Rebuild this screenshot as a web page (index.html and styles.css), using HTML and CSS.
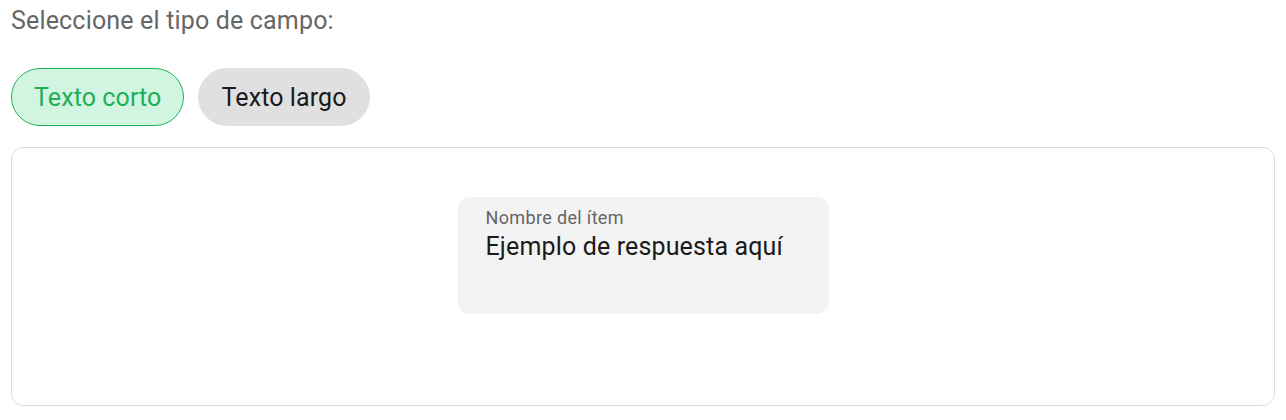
FILE: index.html
```html
<!DOCTYPE html>
<html lang="es">
<head>
<meta charset="utf-8">
<link rel="stylesheet" href="styles.css">
</head>
<body>
<div class="page">
  <p class="prompt">Seleccione el tipo de campo:</p>
  <div class="chips">
    <button class="chip chip-active">Texto corto</button>
    <button class="chip">Texto largo</button>
  </div>
  <div class="card">
    <div class="field">
      <div class="field-label">Nombre del ítem</div>
      <div class="field-value">Ejemplo de respuesta aquí</div>
    </div>
  </div>
</div>
</body>
</html>
```
FILE: styles.css
```css
html, body {
  margin: 0;
  padding: 0;
  background: #ffffff;
}
.page {
  font-family: Roboto, "Liberation Sans", sans-serif;
  padding: 0 11px 0 11px;
}
.prompt {
  margin: 0;
  padding-top: 6px;
  font-size: 25px;
  line-height: 30px;
  letter-spacing: 0.17px;
  color: #666666;
}
.chips {
  display: flex;
  gap: 14px;
  margin-top: 32px;
}
.chip {
  font-family: Roboto, "Liberation Sans", sans-serif;
  font-size: 25px;
  letter-spacing: 0.1px;
  height: 58px;
  padding: 0 22px;
  border-radius: 29px;
  border: 1px solid #e0e0e0;
  background: #e0e0e0;
  color: #1a1a1a;
}
.chip-active {
  background: #d2f5e1;
  border-color: #1db55a;
  color: #1fae58;
}
.card {
  margin-top: 21px;
  border: 1px solid #dcdcdc;
  border-radius: 12px;
  display: flex;
  justify-content: center;
  align-items: flex-start;
  padding-top: 49px;
  box-sizing: border-box;
  height: 259px;
}
.field {
  width: 371px;
  height: 117px;
  box-sizing: border-box;
  background: #f3f3f3;
  border-radius: 12px;
  padding: 10px 28px;
}
.field-label {
  font-size: 18px;
  font-weight: 400;
  letter-spacing: 0.35px;
  line-height: 22px;
  color: #666666;
}
.field-value {
  font-size: 25px;
  letter-spacing: 0.15px;
  line-height: 32px;
  margin-top: 2px;
  color: #1a1a1a;
}
```
